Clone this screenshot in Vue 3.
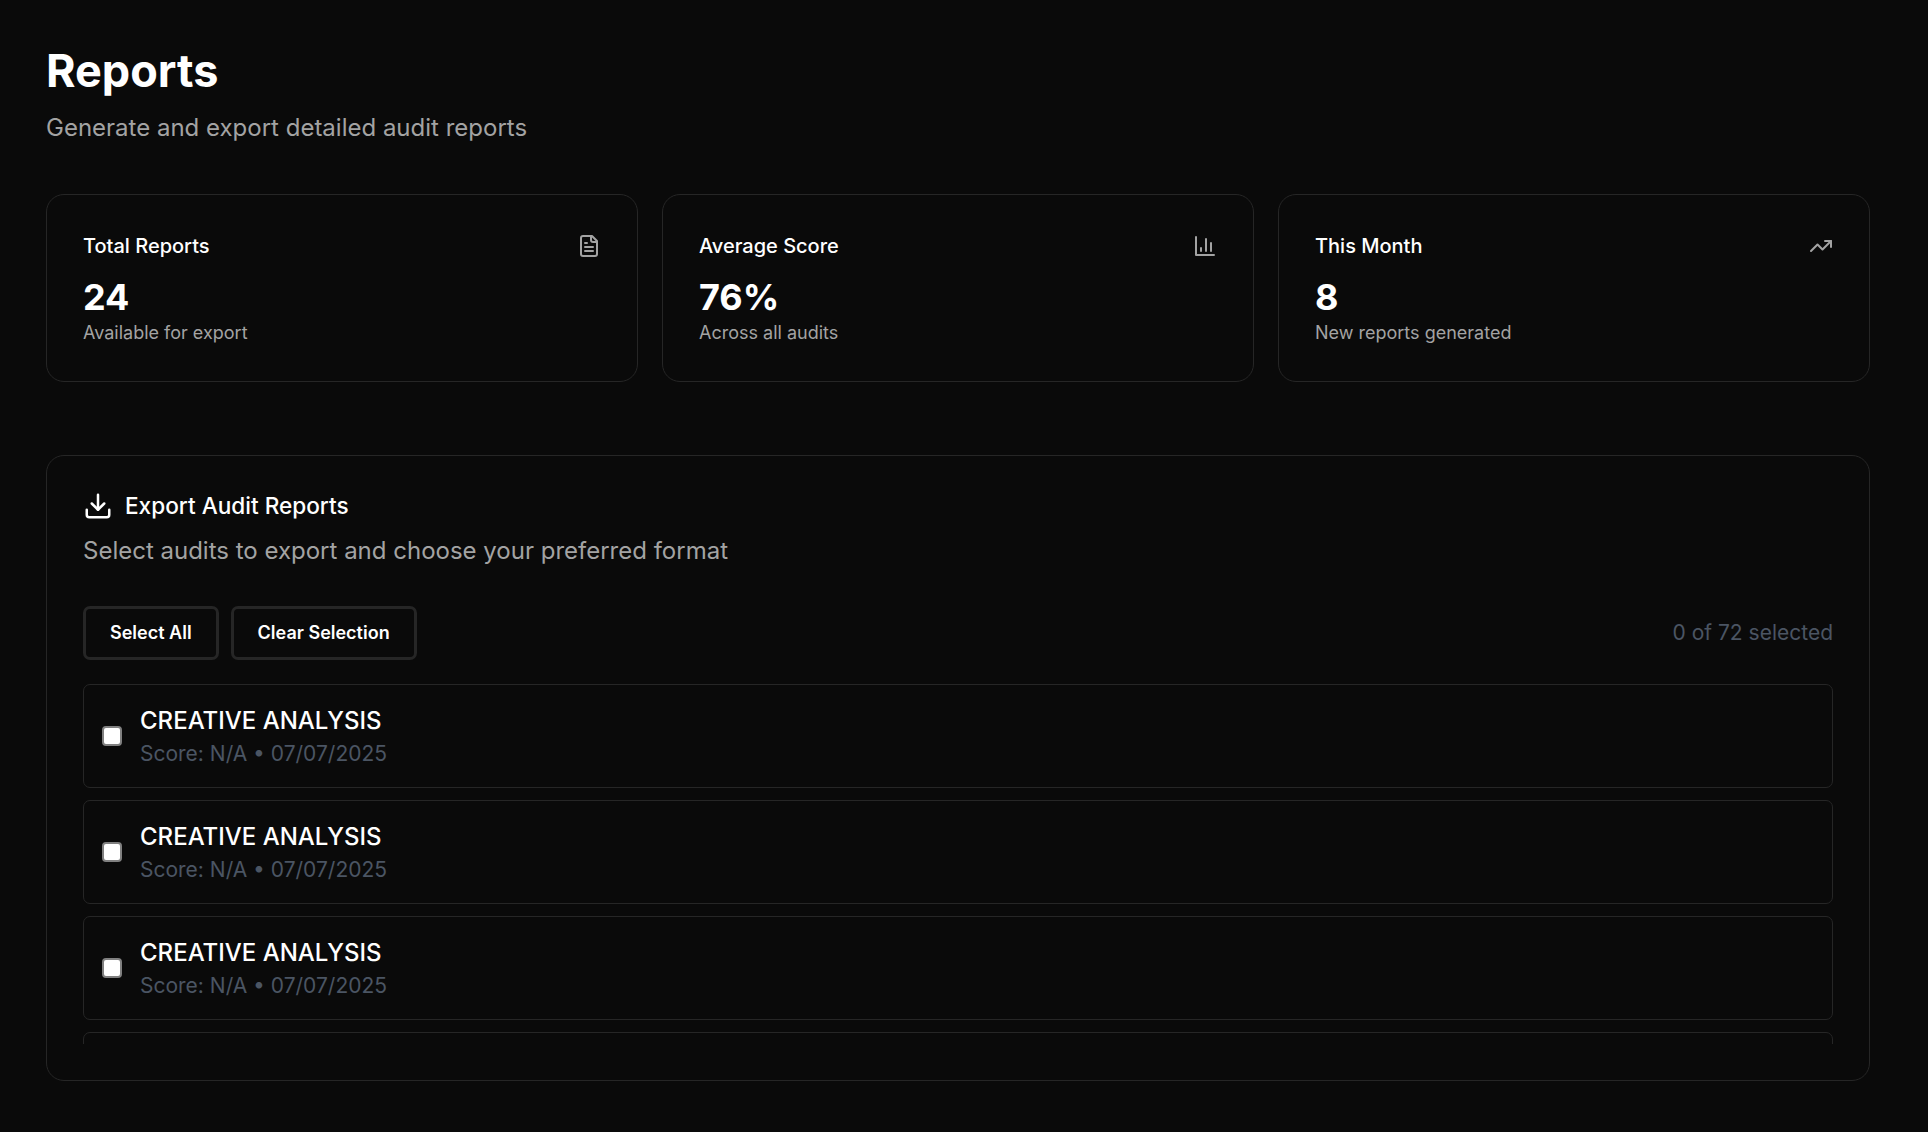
<script setup>
const stats = [
  { label: 'Total Reports', value: '24', note: 'Available for export', icon: 'doc' },
  { label: 'Average Score', value: '76%', note: 'Across all audits', icon: 'bar' },
  { label: 'This Month', value: '8', note: 'New reports generated', icon: 'trend' },
]
const rows = Array.from({ length: 4 }, (_, i) => i)
</script>

<template>
  <main class="page">
    <header class="head">
      <h1>Reports</h1>
      <p>Generate and export detailed audit reports</p>
    </header>

    <section class="stats">
      <article v-for="s in stats" :key="s.label" class="card stat">
        <div class="stat-top">
          <span class="stat-label">{{ s.label }}</span>
          <svg class="stat-icon" viewBox="0 0 24 24" fill="none" stroke="currentColor" stroke-width="2" stroke-linecap="round" stroke-linejoin="round">
            <template v-if="s.icon === 'doc'">
              <path d="M15 2H6a2 2 0 0 0-2 2v16a2 2 0 0 0 2 2h12a2 2 0 0 0 2-2V7Z" />
              <path d="M14 2v4a2 2 0 0 0 2 2h4" />
              <path d="M10 9H8" /><path d="M16 13H8" /><path d="M16 17H8" />
            </template>
            <template v-else-if="s.icon === 'bar'">
              <path d="M3 3v18h18" /><path d="M18 17V9" /><path d="M13 17V5" /><path d="M8 17v-3" />
            </template>
            <template v-else>
              <polyline points="22 7 13.5 15.5 8.5 10.5 2 17" /><polyline points="16 7 22 7 22 13" />
            </template>
          </svg>
        </div>
        <div class="stat-value">{{ s.value }}</div>
        <div class="stat-note">{{ s.note }}</div>
      </article>
    </section>

    <section class="card export">
      <h2>
        <svg class="dl" viewBox="0 0 24 24" fill="none" stroke="currentColor" stroke-width="2" stroke-linecap="round" stroke-linejoin="round">
          <path d="M21 15v4a2 2 0 0 1-2 2H5a2 2 0 0 1-2-2v-4" /><polyline points="7 10 12 15 17 10" /><line x1="12" y1="15" x2="12" y2="3" />
        </svg>
        Export Audit Reports
      </h2>
      <p class="export-sub">Select audits to export and choose your preferred format</p>
      <div class="toolbar">
        <div class="btns">
          <button type="button">Select All</button>
          <button type="button">Clear Selection</button>
        </div>
        <span class="count">0 of 72 selected</span>
      </div>
      <div class="list">
        <label v-for="r in rows" :key="r" class="row">
          <input type="checkbox" />
          <div class="row-text">
            <div class="row-title">CREATIVE ANALYSIS</div>
            <div class="row-meta">Score: N/A • 07/07/2025</div>
          </div>
        </label>
      </div>
    </section>
  </main>
</template>

<style>
html, body { background: #0a0a0a; }
</style>

<style scoped>
.page {
  box-sizing: border-box;
  height: 1132px;
  overflow: hidden;
  padding: 46px 58px 0 46px;
  background: #0a0a0a;
  color: #fff;
  font-family: Inter, "Liberation Sans", sans-serif;
}
h1 { margin: 0; font-size: 45px; line-height: 50px; font-weight: 700; }
.head p { margin: 16px 0 0; font-size: 24px; line-height: 32px; color: #a3a3a3; }
.stats { display: grid; grid-template-columns: repeat(3, 1fr); gap: 24px; margin-top: 50px; }
.card { border: 1px solid #262626; background: #0a0a0a; border-radius: 18px; box-sizing: border-box; }
.stat { height: 188px; padding: 37px 36px; }
.stat-top { display: flex; justify-content: space-between; align-items: center; height: 28px; }
.stat-label { font-size: 20px; font-weight: 450; }
.stat-icon { width: 24px; height: 24px; color: #a3a3a3; }
.stat-value { margin-top: 14px; font-size: 36px; line-height: 46px; font-weight: 700; }
.stat-note { font-size: 18px; line-height: 24px; color: #a3a3a3; margin-top: 1px; }
.export { margin-top: 73px; height: 626px; padding: 37px 36px; }
h2 { display: flex; align-items: center; gap: 12px; height: 26px; margin: 0; font-size: 22.6px; line-height: 26px; font-weight: 450; }
.dl { width: 30px; height: 30px; flex: none; }
.export-sub { margin: 16px 0 0; font-size: 24px; line-height: 32px; color: #a3a3a3; }
.toolbar { display: flex; justify-content: space-between; align-items: center; margin-top: 39px; }
.btns { display: flex; gap: 12px; }
button {
  box-sizing: border-box; height: 54px; padding: 0 24px 2px;
  border: 3px solid #262626; border-radius: 7px;
  background: #0a0a0a; color: #fff;
  font: 600 18px Inter, sans-serif;
}
.count { font-size: 21px; color: #4b5563; position: relative; top: -1px; }
.list { display: flex; flex-direction: column; gap: 12px; height: 360px; margin-top: 24px; overflow: hidden; }
.row {
  flex: none; box-sizing: border-box; height: 104px;
  display: flex; align-items: center; gap: 18px; padding: 0 18px;
  border: 1px solid #262626; border-radius: 7px;
}
input {
  appearance: none; box-sizing: border-box; margin: 0; width: 20px; height: 20px; flex: none;
  background: #fff; border: 2px solid #808080; border-radius: 4px;
}
.row-text { padding-top: 1px; }
.row-title { font-size: 24px; line-height: 32px; font-weight: 450; }
.row-meta { font-size: 21px; line-height: 28px; color: #4b5563; margin-top: 3px; }
</style>
